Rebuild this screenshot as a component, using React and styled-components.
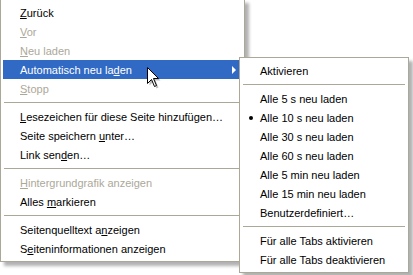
import React from 'react';
import styled, { createGlobalStyle } from 'styled-components';

const GlobalStyle = createGlobalStyle`
  html, body {
    margin: 0;
    padding: 0;
    background: #fff;
  }
  body {
    font-family: "Liberation Sans", Arial, sans-serif;
    font-size: 11px;
    color: #000;
  }
`;

const mainItems = [
  { label: 'Zurück', key: 0 },
  { label: 'Vor', key: 0, disabled: true },
  { label: 'Neu laden', key: 0, disabled: true },
  { label: 'Automatisch neu laden', key: 18, active: true, submenu: true },
  { label: 'Stopp', key: 0, disabled: true },
  { separator: true },
  { label: 'Lesezeichen für diese Seite hinzufügen…', key: 0 },
  { label: 'Seite speichern unter…', key: 16 },
  { label: 'Link senden…', key: 8 },
  { separator: true },
  { label: 'Hintergrundgrafik anzeigen', key: 0, disabled: true },
  { label: 'Alles markieren', key: 6 },
  { separator: true },
  { label: 'Seitenquelltext anzeigen', key: 17 },
  { label: 'Seiteninformationen anzeigen', key: 1 },
];

const subItems = [
  { label: 'Aktivieren' },
  { separator: true },
  { label: 'Alle 5 s neu laden' },
  { label: 'Alle 10 s neu laden', checked: true },
  { label: 'Alle 30 s neu laden' },
  { label: 'Alle 60 s neu laden' },
  { label: 'Alle 5 min neu laden' },
  { label: 'Alle 15 min neu laden' },
  { label: 'Benutzerdefiniert…' },
  { separator: true },
  { label: 'Für alle Tabs aktivieren' },
  { label: 'Für alle Tabs deaktivieren' },
];

function Label({ text, accessKey }) {
  if (accessKey === undefined) return <Text>{text}</Text>;
  return (
    <Text>
      {text.slice(0, accessKey)}
      <u>{text[accessKey]}</u>
      {text.slice(accessKey + 1)}
    </Text>
  );
}

function renderItems(items, indent) {
  return items.map((item, i) =>
    item.separator ? (
      <Separator key={i} />
    ) : (
      <Item key={i} $indent={indent} $disabled={item.disabled} $active={item.active}>
        {item.checked && <Bullet />}
        <Label text={item.label} accessKey={item.key} />
        {item.submenu && <Arrow />}
      </Item>
    )
  );
}

function Cursor() {
  return (
    <CursorWrap width="16" height="24" viewBox="0 0 16 24">
      <path
        d="M2.5 2.5 L2.5 18.5 L6.5 14.5 L9.5 21.5 L11.5 20.5 L8.5 13.5 L13.5 13.5 Z"
        fill="rgba(0,0,0,0.25)"
      />
      <path
        d="M0.5 0.5 L0.5 16.5 L4.5 12.5 L7.5 19.5 L9.5 18.5 L6.5 11.5 L11.5 11.5 Z"
        fill="#fff"
        stroke="#000"
        strokeWidth="1"
      />
    </CursorWrap>
  );
}

export default function App() {
  return (
    <>
      <GlobalStyle />
      <Screen>
        <Menu $width={245}>{renderItems(mainItems, 17)}</Menu>
        <SubMenu $width={170}>{renderItems(subItems, 18)}</SubMenu>
        <Cursor />
      </Screen>
    </>
  );
}

const Screen = styled.div`
  position: relative;
  display: flex;
  align-items: flex-start;
  width: 413px;
  height: 275px;
  overflow: hidden;
`;

const Menu = styled.div`
  box-sizing: border-box;
  width: ${p => p.$width}px;
  margin-top: -1px;
  padding: 3px 2px;
  background: #fff;
  border: 1px solid #aca899;
  box-shadow: 4px 4px 3px rgba(0, 0, 0, 0.3);
  display: flex;
  flex-direction: column;
`;

const SubMenu = styled(Menu)`
  margin-top: 57px;
  margin-left: -6px;
  position: relative;
  z-index: 1;
`;

const Item = styled.div`
  position: relative;
  height: 19px;
  display: flex;
  align-items: center;
  padding-left: ${p => p.$indent}px;
  padding-right: 6px;
  white-space: nowrap;
  color: ${p => (p.$disabled ? '#aca899' : p.$active ? '#fff' : '#000')};
  background: ${p => (p.$active ? '#316ac5' : 'transparent')};
`;

const Text = styled.span`
  white-space: pre;
`;

const Separator = styled.div`
  height: 9px;
  display: flex;
  align-items: center;
  padding: 0 1px;

  &::after {
    content: '';
    flex: 1;
    height: 1px;
    background: #aca899;
  }
`;

const Arrow = styled.span`
  margin-left: auto;
  width: 0;
  height: 0;
  border-left: 4px solid #fff;
  border-top: 4px solid transparent;
  border-bottom: 4px solid transparent;
`;

const Bullet = styled.span`
  position: absolute;
  left: 7px;
  top: 8px;
  width: 4px;
  height: 4px;
  border-radius: 50%;
  background: #000;
`;

const CursorWrap = styled.svg`
  position: absolute;
  left: 147px;
  top: 67px;
  z-index: 2;
`;
